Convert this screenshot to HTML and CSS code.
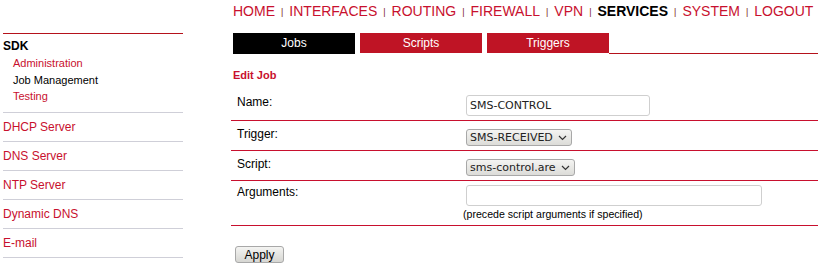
FILE: index.html
```html
<!DOCTYPE html>
<html>
<head>
	<title>Job Management</title>
	<link rel="stylesheet" href="styles.css">
</head>
<body>
	<div class="page">
		<div class="sidebar">
			<div class="side-group">
				<div class="side-title">SDK</div>
				<ul class="side-sub">
					<li><a href="#">Administration</a></li>
					<li class="current">Job Management</li>
					<li><a href="#">Testing</a></li>
				</ul>
			</div>
			<a class="side-item" href="#">DHCP Server</a>
			<a class="side-item" href="#">DNS Server</a>
			<a class="side-item" href="#">NTP Server</a>
			<a class="side-item" href="#">Dynamic DNS</a>
			<a class="side-item" href="#">E-mail</a>
		</div>

		<div class="main">
			<div class="nav"><a href="#">HOME</a><span class="sep">|</span><a href="#">INTERFACES</a><span class="sep">|</span><a href="#">ROUTING</a><span class="sep">|</span><a href="#">FIREWALL</a><span class="sep">|</span><a href="#">VPN</a><span class="sep">|</span><a href="#" class="active">SERVICES</a><span class="sep">|</span><a href="#">SYSTEM</a><span class="sep">|</span><a href="#">LOGOUT</a></div>

			<div class="tabs">
				<a href="#" class="tab selected">Jobs</a>
				<a href="#" class="tab">Scripts</a>
				<a href="#" class="tab">Triggers</a>
				<div class="tab-fill"></div>
			</div>

			<h2 class="title">Edit Job</h2>

			<div class="form">
				<div class="row row-name">
					<div class="label">Name:</div>
					<div class="value"><input class="text" type="text" value="SMS-CONTROL"></div>
				</div>
				<div class="row row-sel">
					<div class="label">Trigger:</div>
					<div class="value">
						<button class="select">SMS-RECEIVED
							<svg width="9" height="6" viewBox="0 0 9 6"><path d="M1 1 L4.5 4.5 L8 1" fill="none" stroke="#333" stroke-width="1.2"/></svg>
						</button>
					</div>
				</div>
				<div class="row row-sel">
					<div class="label">Script:</div>
					<div class="value">
						<button class="select">sms-control.are
							<svg width="9" height="6" viewBox="0 0 9 6"><path d="M1 1 L4.5 4.5 L8 1" fill="none" stroke="#333" stroke-width="1.2"/></svg>
						</button>
					</div>
				</div>
				<div class="row row-args">
					<div class="label">Arguments:</div>
					<div class="value">
						<input class="text wide" type="text" value="">
						<div class="hint">(precede script arguments if specified)</div>
					</div>
				</div>
			</div>

			<button class="apply">Apply</button>
		</div>
	</div>
</body>
</html>
```

FILE: styles.css
```css
body {
	margin: 0;
	padding: 0;
	background-color: #fff;
	font-family: "Liberation Sans", Arial, sans-serif;
	color: #000;
}

a {
	color: #c8102e;
	text-decoration: none;
}

.page {
	display: flex;
}

/* left menu */
.sidebar {
	width: 180px;
	margin-left: 3px;
	padding-top: 33px;
	flex: none;
}

.side-group {
	border-top: 1px solid #b5121b;
	border-bottom: 1px solid #cfcfd8;
	padding: 4px 0 7px;
}

.side-title {
	font-size: 12px;
	font-weight: bold;
	line-height: 17px;
}

.side-sub {
	list-style: none;
	margin: 0;
	padding: 0 0 0 10px;
	font-size: 11px;
	line-height: 16.5px;
}

.side-sub .current {
	color: #000;
}

.side-item {
	display: block;
	font-size: 12px;
	line-height: 28px;
	border-bottom: 1px solid #cfcfd8;
}

/* main area */
.main {
	flex: 1;
	margin-left: 48px;
}

.nav {
	height: 33px;
	padding-left: 2px;
	font-size: 14px;
	line-height: 22px;
	white-space: nowrap;
}

.nav a {
	color: #c8102e;
}

.nav a.active {
	color: #000;
	font-weight: bold;
}

.sep {
	font-size: 9px;
	color: #7a1a1a;
	margin: 0 6px;
	vertical-align: 1px;
}

.tabs {
	display: flex;
	margin-left: 2px;
	height: 21px;
}

.tab {
	width: 122px;
	margin-right: 5px;
	background-color: #bf1425;
	color: #fff;
	font-size: 12px;
	line-height: 20px;
	height: 20px;
	text-align: center;
}

.tab:nth-child(3) {
	margin-right: 0;
}

.tab.selected {
	background-color: #000;
	height: 21px;
}

.tab-fill {
	flex: 1;
	border-bottom: 1px solid #b5121b;
	height: 20px;
}

.title {
	margin: 14px 0 0 2px;
	font-size: 11px;
	line-height: 14px;
	color: #c8102e;
}

.form {
	margin-top: 6px;
}

.row {
	display: flex;
	border-bottom: 1px solid #c8102e;
	box-sizing: border-box;
	padding-top: 6px;
}

.row-name {
	height: 33px;
	padding-top: 7px;
}

.row-sel {
	height: 30px;
}

.row-args {
	height: 45px;
	padding-top: 4px;
}

.label {
	width: 229px;
	padding-left: 6px;
	font-size: 12px;
	line-height: 14px;
	flex: none;
}

.text {
	box-sizing: border-box;
	width: 184px;
	height: 21px;
	border: 1px solid #cfcfcf;
	border-radius: 3px;
	padding: 0 3px;
	font-family: "DejaVu Sans", sans-serif;
	font-size: 11px;
	color: #222;
	margin: 0;
}

.text.wide {
	width: 296px;
}

.select {
	display: inline-flex;
	align-items: center;
	gap: 5px;
	height: 17px;
	padding: 0 4px 0 3px;
	border: 1px solid #a8a8a8;
	border-radius: 3px;
	background: linear-gradient(#f4f4f2, #dcdcd8);
	font-family: "DejaVu Sans", sans-serif;
	font-size: 11px;
	color: #222;
	margin: 1px 0 0;
}

.hint {
	font-size: 10.6px;
	margin: 2px 0 0 -3px;
}

.apply {
	margin: 20px 0 0 4px;
	height: 17px;
	width: 49px;
	padding: 0;
	border: 1px solid #a8a8a8;
	border-radius: 3px;
	background: linear-gradient(#f4f4f2, #d6d6d2);
	font-family: "Liberation Sans", Arial, sans-serif;
	font-size: 12px;
	color: #000;
}
```
